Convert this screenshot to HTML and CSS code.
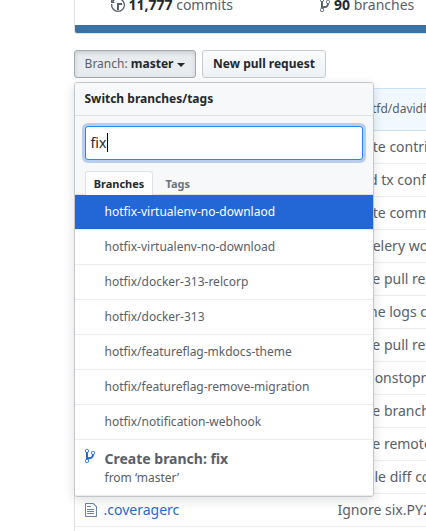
FILE: index.html
```html
<!DOCTYPE html>
<html lang="en">
<head>
<meta charset="utf-8">
<title>Switch branches/tags</title>
<link rel="stylesheet" href="styles.css">
</head>
<body>
<main class="repo">
  <section class="summary">
    <ul class="stats">
      <li class="stat"><svg class="history" width="14" height="16" viewBox="0 0 14 16"><path d="M8 13H6V6h5v2H8v5zM7 1C4.81 1 2.87 2.02 1.59 3.59L0 2v4h4L2.5 4.5C3.55 3.17 5.17 2.3 7 2.3c3.14 0 5.7 2.56 5.7 5.7s-2.56 5.7-5.7 5.7A5.71 5.71 0 0 1 1.3 8c0-.34.03-.67.09-1H.08C.03 7.33 0 7.66 0 8c0 3.86 3.14 7 7 7s7-3.14 7-7-3.14-7-7-7z"/></svg><b>11,777</b> commits</li>
      <li class="stat"><svg width="10" height="16" viewBox="0 0 10 16"><path d="M10 5c0-1.11-.89-2-2-2a1.993 1.993 0 0 0-1 3.72v.3c-.02.52-.23.98-.63 1.38-.4.4-.86.61-1.38.63-.83.02-1.48.16-2 .45V4.72a1.993 1.993 0 0 0-1-3.72C.88 1 0 1.89 0 3a2 2 0 0 0 1 1.72v6.56c-.59.35-1 .99-1 1.72 0 1.11.89 2 2 2 1.11 0 2-.89 2-2 0-.53-.2-1-.53-1.36.09-.06.48-.41.59-.47.25-.11.56-.17.94-.17 1.05-.05 1.95-.45 2.75-1.25S8.95 7.77 9 6.73h-.02C9.59 6.37 10 5.73 10 5zM2 1.8c.66 0 1.2.55 1.2 1.2 0 .65-.55 1.2-1.2 1.2C1.35 4.2.8 3.65.8 3c0-.65.55-1.2 1.2-1.2zm0 12.41c-.66 0-1.2-.55-1.2-1.2 0-.65.55-1.2 1.2-1.2.65 0 1.2.55 1.2 1.2 0 .65-.55 1.2-1.2 1.2zm6-8c-.66 0-1.2-.55-1.2-1.2 0-.65.55-1.2 1.2-1.2.65 0 1.2.55 1.2 1.2 0 .65-.55 1.2-1.2 1.2z"/></svg><b>90</b> branches</li>
    </ul>
    <div class="language-bar"></div>
  </section>

  <div class="toolbar">
    <div class="branch-select">
      <button class="btn btn-selected"><span class="label">Branch:</span> master<span class="caret"></span></button>
      <div class="menu">
        <div class="menu-title">Switch branches/tags</div>
        <div class="menu-filter">
          <div class="field">fix<span class="cursor"></span></div>
          <div class="tabs"><span class="tab tab-on">Branches</span><span class="tab">Tags</span></div>
        </div>
        <div class="menu-list">
          <div class="item item-on">hotfix-virtualenv-no-downlaod</div>
          <div class="item">hotfix-virtualenv-no-download</div>
          <div class="item">hotfix/docker-313-relcorp</div>
          <div class="item">hotfix/docker-313</div>
          <div class="item">hotfix/featureflag-mkdocs-theme</div>
          <div class="item">hotfix/featureflag-remove-migration</div>
          <div class="item">hotfix/notification-webhook</div>
        </div>
        <div class="create">
          <svg width="10" height="16" viewBox="0 0 10 16"><path d="M10 5c0-1.11-.89-2-2-2a1.993 1.993 0 0 0-1 3.72v.3c-.02.52-.23.98-.63 1.38-.4.4-.86.61-1.38.63-.83.02-1.48.16-2 .45V4.72a1.993 1.993 0 0 0-1-3.72C.88 1 0 1.89 0 3a2 2 0 0 0 1 1.72v6.56c-.59.35-1 .99-1 1.72 0 1.11.89 2 2 2 1.11 0 2-.89 2-2 0-.53-.2-1-.53-1.36.09-.06.48-.41.59-.47.25-.11.56-.17.94-.17 1.05-.05 1.95-.45 2.75-1.25S8.95 7.77 9 6.73h-.02C9.59 6.37 10 5.73 10 5zM2 1.8c.66 0 1.2.55 1.2 1.2 0 .65-.55 1.2-1.2 1.2C1.35 4.2.8 3.65.8 3c0-.65.55-1.2 1.2-1.2zm0 12.41c-.66 0-1.2-.55-1.2-1.2 0-.65.55-1.2 1.2-1.2.65 0 1.2.55 1.2 1.2 0 .65-.55 1.2-1.2 1.2zm6-8c-.66 0-1.2-.55-1.2-1.2 0-.65.55-1.2 1.2-1.2.65 0 1.2.55 1.2 1.2 0 .65-.55 1.2-1.2 1.2z"/></svg>
          <div><div class="create-name">Create branch: fix</div><div class="create-from">from ‘master’</div></div>
        </div>
      </div>
    </div>
    <button class="btn">New pull request</button>
  </div>

  <section class="files">
    <div class="latest"><span class="latest-text">tfd/davidf</span></div>
    <div class="row"><span class="message">Update contri</span></div>
    <div class="row"><span class="message tail">d tx conf</span></div>
    <div class="row"><span class="message">Update comm</span></div>
    <div class="row"><span class="message">Use celery wo</span></div>
    <div class="row"><span class="message">Merge pull re</span></div>
    <div class="row"><span class="message tail">he logs d</span></div>
    <div class="row"><span class="message">Merge pull re</span></div>
    <div class="row"><span class="message">Use nonstopr</span></div>
    <div class="row"><span class="message">Merge branch</span></div>
    <div class="row"><span class="message">Merge remote</span></div>
    <div class="row"><span class="message">Disable diff co</span></div>
    <div class="row">
      <span class="file"><svg width="12" height="16" viewBox="0 0 12 16"><path d="M6 5H2V4h4v1zM2 8h7V7H2v1zm0 2h7V9H2v1zm0 2h7v-1H2v1zm10-7.5V14c0 .55-.45 1-1 1H1c-.55 0-1-.45-1-1V2c0-.55.45-1 1-1h7.5L12 4.5zM11 5L8 2H1v12h10V5z"/></svg><a>.coveragerc</a></span>
      <span class="message">Ignore six.PY2</span>
    </div>
    <div class="row"></div>
  </section>
</main>
</body>
</html>
```
FILE: styles.css
```css
* { box-sizing: border-box; }
body {
  margin: 0;
  height: 531px;
  overflow: hidden;
  background: #fff;
  color: #24292e;
  font: 14px/21px "Noto Sans", sans-serif;
}
svg { display: block; flex: none; fill: currentColor; }
.repo { height: 531px; padding-left: 74px; overflow: hidden; }

.summary {
  height: 34px;
  border: 1px solid #dfe2e5;
  border-width: 0 0 1px 1px;
  border-radius: 0 0 0 3px;
  overflow: hidden;
}
.stats {
  display: flex;
  height: 25px;
  margin: 0;
  padding: 0 0 0 36px;
  list-style: none;
  color: #586069;
}
.stat { display: flex; flex: none; width: 209px; height: 16px; line-height: 10px; white-space: pre; }
.stat:last-child { width: auto; }
.stat svg { margin: -3px 4px 0 0; }
.stat .history { margin-right: 3.5px; }
.stat b { color: #24292e; }
.language-bar { height: 8px; background: #3a72a5; }

.toolbar { display: flex; gap: 6px; margin-top: 16px; height: 28px; }
.branch-select { position: relative; }
.btn {
  display: block;
  width: 124px;
  height: 28px;
  padding: 0;
  border: 1px solid #c8cbcf;
  border-radius: 3px;
  background: linear-gradient(#fafbfc, #eff3f6 90%);
  color: #24292e;
  font: 700 12px/20px "Noto Sans", sans-serif;
  white-space: nowrap;
}
.btn-selected {
  width: 122px;
  border-color: #a5a8ac;
  background: #e9ecef;
  box-shadow: inset 0 2px 4px rgba(27, 31, 35, .15);
}
.label { color: #586069; font-weight: 400; }
.caret {
  display: inline-block;
  margin-left: 4px;
  border: 4px solid transparent;
  border-top-color: #24292e;
  border-bottom: 0;
  vertical-align: middle;
}

.menu {
  position: absolute;
  z-index: 2;
  top: 32px;
  left: 0;
  width: 300px;
  border: 1px solid #c3c7cb;
  border-radius: 3px;
  background: #fff;
  box-shadow: 0 3px 12px rgba(27, 31, 35, .15);
  color: #586069;
  font-size: 12px;
  overflow: hidden;
}
.menu-title {
  height: 33px;
  padding: 0 9.5px;
  border-bottom: 1px solid #dfe2e5;
  background: #f6f8fa;
  color: #24292e;
  font-weight: 700;
  line-height: 32px;
}
.menu-filter { height: 79px; padding: 10px 10px 0; background: #f6f8fa; border-bottom: 1px solid #dfe2e5; }
.field {
  display: flex;
  align-items: center;
  width: 278px;
  height: 34px;
  padding: 0 5px 2px 4.5px;
  border: 1px solid #2188ff;
  border-radius: 3px;
  background: #fff;
  box-shadow: 0 0 0 3px #b8cdf0;
  color: #24292e;
  font-size: 14px;
}
.cursor { width: 1px; height: 19px; margin-left: 1px; background: #000; }
.tabs { display: flex; margin-top: 11px; }
.tab { height: 24px; padding: 0 12.5px; color: #6a737d; font-size: 11px; font-weight: 700; line-height: 26px; }
.tab-on {
  width: 68px;
  padding: 0;
  text-align: center;
  border: 1px solid #dfe2e5;
  border-bottom: 0;
  border-radius: 3px 3px 0 0;
  background: #fff;
  color: #24292e;
  line-height: 24px;
}
.item { height: 35px; padding-left: 29.5px; border-bottom: 1px solid #eaecef; line-height: 34px; }
.item-on { background: #2366d6; background-clip: padding-box; color: #fff; }
.create { display: flex; gap: 9.5px; height: 56px; padding: 8px 10px; border-bottom: 1px solid #eaecef; }
.create svg { color: #2366d6; }
.create-name { font-size: 14px; font-weight: 700; line-height: 21px; }
.create-from { line-height: 17px; }

.files { margin-top: 10px; border-left: 1px solid #dfe2e5; }
.latest {
  height: 43px;
  margin-left: -1px;
  padding-left: 297px;
  border: 1px solid #c8e1ff;
  border-right: 0;
  background: #f1f8ff;
  color: #586069;
  font-size: 12px;
  line-height: 39px;
}
.row { display: flex; justify-content: flex-start; height: 33px; border-bottom: 1px solid #eaecef; line-height: 32px; }
.file { display: flex; gap: 6.5px; flex: none; width: 262.5px; padding-left: 10px; color: #2468d6; }
.file svg { margin-top: 8px; color: #6a84a8; }
.message { color: #586069; white-space: nowrap; }
.message:first-child { margin-left: 262.5px; }
.message.tail { margin-left: 294px; }
```
